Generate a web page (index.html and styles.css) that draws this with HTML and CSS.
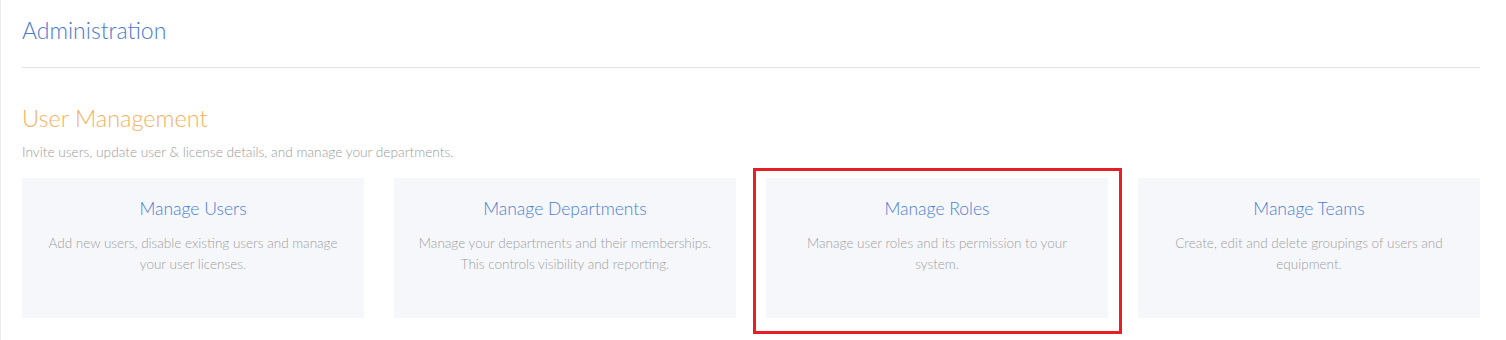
FILE: index.html
```html
<!DOCTYPE html>
<html lang="en">
<head>
  <meta charset="UTF-8">
  <title>Administration</title>
  <link rel="stylesheet" href="styles.css">
</head>
<body>
  <div class="page">
    <h1 class="page-title">Administration</h1>
    <hr class="divider">

    <!-- User Management -->
    <section class="section">
      <h2 class="section-title">User Management</h2>
      <p class="section-desc">Invite users, update user &amp; license details, and manage your departments.</p>

      <div class="cards">
        <a class="card" href="#users">
          <h3 class="card-title">Manage Users</h3>
          <p class="card-desc">Add new users, disable existing users and manage your user licenses.</p>
        </a>
        <a class="card" href="#departments">
          <h3 class="card-title">Manage Departments</h3>
          <p class="card-desc">Manage your departments and their memberships. This controls visibility and reporting.</p>
        </a>
        <a class="card card-highlight" href="#roles">
          <h3 class="card-title">Manage Roles</h3>
          <p class="card-desc">Manage user roles and its permission to your system.</p>
        </a>
        <a class="card" href="#teams">
          <h3 class="card-title">Manage Teams</h3>
          <p class="card-desc">Create, edit and delete groupings of users and equipment.</p>
        </a>
      </div>
    </section>
  </div>
</body>
</html>
```

FILE: styles.css
```css
body {
  margin: 0;
  font-family: 'Lato', 'Open Sans', sans-serif;
  font-weight: 300;
  background: #fff;
  color: #999;
}
.page {
  min-height: 340px;
  box-sizing: border-box;
  border-left: 1px solid #ececec;
  padding: 15px 26px 0 21px;
}
.page-title {
  margin: 0;
  font-size: 23px;
  line-height: 30px;
  font-weight: 300;
  color: #4a78cc;
}
.divider {
  margin: 22px 0 0;
  border: 0;
  border-top: 1px solid #e3e3e3;
}
.section {
  margin-top: 35px;
}
.section-title {
  margin: 0;
  font-size: 23.5px;
  line-height: 30px;
  font-weight: 300;
  color: #f4b25e;
}
.section-desc {
  margin: 10px 0 0;
  font-size: 13.7px;
  line-height: 18px;
  color: #9a9a9a;
}
.cards {
  display: grid;
  grid-template-columns: repeat(4, 1fr);
  gap: 30px;
  margin-top: 17px;
}
.card {
  position: relative;
  display: block;
  height: 140px;
  box-sizing: border-box;
  padding: 18px 20px 0;
  background: #f6f7fb;
  text-align: center;
  text-decoration: none;
}
.card-title {
  margin: 0;
  font-size: 17.5px;
  line-height: 25px;
  font-weight: 300;
  color: #4a80d2;
}
.card-desc {
  margin: 12px 0 0;
  font-size: 13.5px;
  line-height: 21px;
  color: #a0a0a0;
}
/* red highlight frame */
.card-highlight::after {
  content: '';
  position: absolute;
  top: -10px;
  left: -13px;
  right: -14px;
  bottom: -16px;
  border: 3px solid #e81e26;
}
```
